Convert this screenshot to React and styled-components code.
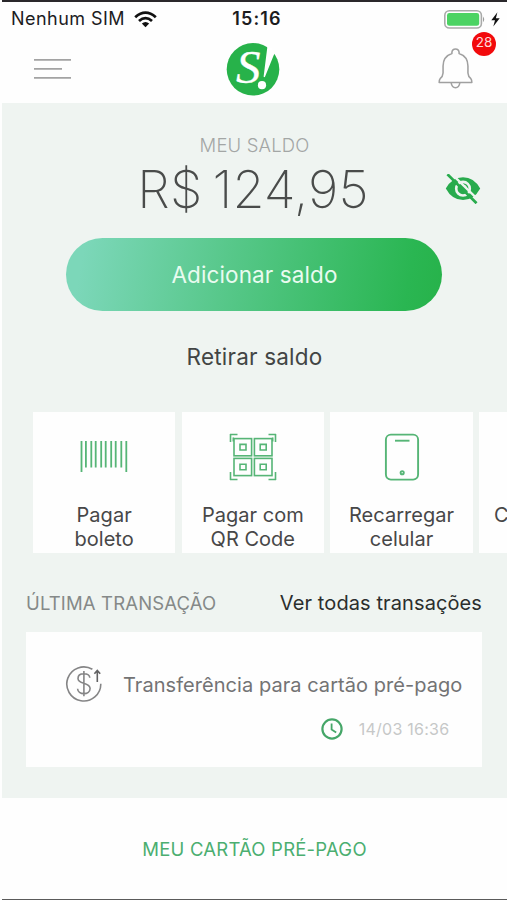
import React from "react";
import styled, { createGlobalStyle } from "styled-components";

const GREEN = "#27b24a";
const LINE_GREEN = "#56b576";

const GlobalStyle = createGlobalStyle`
  *, *::before, *::after { box-sizing: border-box; }
  body { margin: 0; background: #fff; font-family: Inter, "Liberation Sans", sans-serif; }
  svg { display: block; flex: none; }
`;

const Screen = styled.div`
  display: flex;
  flex-direction: column;
  width: 507px;
  height: 900px;
  padding-left: 2px;
  overflow: hidden;
  background: #fefefe;
`;

const StatusBar = styled.header`
  display: grid;
  flex: none;
  grid-template-columns: 1fr auto 1fr;
  align-items: center;
  height: 34px;
  padding: 2px 7px 0 9px;
  border-top: 2px solid #2a282b;
  color: #1c1c1e;
  font-size: 18px;
  line-height: 24px;
`;

const Carrier = styled.div`
  display: flex;
  align-items: center;
  gap: 9px;
  letter-spacing: 0.45px;
  white-space: nowrap;
`;

const Clock = styled.time`
  padding-left: 3px;
  font-weight: 600;
  letter-spacing: 1.1px;
`;

const Power = styled.div`
  display: flex;
  justify-content: flex-end;
  align-items: center;
  gap: 5px;
`;

const NavBar = styled.nav`
  display: grid;
  flex: none;
  grid-template-columns: 1fr auto 1fr;
  align-items: center;
  height: 69px;
  padding: 0 34px 0 31px;
`;

const IconButton = styled.button`
  position: relative;
  justify-self: ${(p) => p.$side};
  padding: 0;
  border: 0;
  background: none;
`;

const Badge = styled.span`
  position: absolute;
  top: -16px;
  right: -23px;
  width: 24px;
  height: 24px;
  border-radius: 50%;
  background: #f20a0c;
  color: #ffd9d9;
  font: 400 13.5px/21px Inter, sans-serif;
  text-align: center;
`;

const Main = styled.main`
  display: flex;
  flex: none;
  flex-direction: column;
  height: 695px;
  background: #eff4f1;
`;

const BalanceLabel = styled.h2`
  margin: 29.6px 0 0;
  color: #a3a6a5;
  font-size: 18.5px;
  font-weight: 300;
  line-height: 24px;
  letter-spacing: 0.15px;
  text-align: center;
`;

const BalanceRow = styled.div`
  display: grid;
  grid-template-columns: 1fr auto 1fr;
  align-items: center;
  height: 63.4px;
  padding: 0 26px 0 23px;
`;

const Amount = styled.strong`
  grid-column: 2;
  padding-top: 1px;
  color: #4a4c4b;
  font-size: 52px;
  font-weight: 200;
  line-height: 63px;
  letter-spacing: 0.1px;
  word-spacing: -4.5px;
  white-space: nowrap;
`;

const AddButton = styled.button`
  align-self: center;
  width: 376px;
  height: 73px;
  margin: 18px 2px 0 0;
  padding: 0 0 0 2px;
  border: 0;
  border-radius: 37px;
  background: linear-gradient(100deg, #7cd7b9 5%, #58c88b 42%, #2ab652 90%, #27b24a 100%);
  color: #e9fbf0;
  font: 400 22.5px/73px Inter, sans-serif;
  letter-spacing: 0.1px;
`;

const WithdrawButton = styled.button`
  align-self: center;
  margin-top: 31px;
  padding: 0;
  border: 0;
  background: none;
  color: #424544;
  font: 400 22.5px/30px Inter, sans-serif;
  letter-spacing: 0.2px;
`;

const Shortcuts = styled.div`
  display: flex;
  gap: 6.4px;
  height: 141px;
  margin-top: 40px;
  padding-left: 31px;
  overflow: hidden;
`;

const Shortcut = styled.button`
  display: flex;
  flex: none;
  flex-direction: column;
  align-items: ${(p) => (p.$start ? "flex-start" : "center")};
  width: 142.3px;
  padding: 21px ${(p) => (p.$start ? 15 : 0)}px 0;
  border: 0;
  background: #fefefe;
  color: #474748;
  font: 400 20px/24.6px Inter, sans-serif;
  letter-spacing: 0.02px;
`;

const ShortcutIcon = styled.span`
  height: 69.8px;
`;

const ShortcutLabel = styled.span`
  white-space: pre-line;
`;

const SectionHead = styled.div`
  display: flex;
  justify-content: space-between;
  align-items: center;
  height: 26px;
  margin-top: 37px;
  padding: 0 25px 0 24px;
  white-space: nowrap;
`;

const SectionTitle = styled.h3`
  margin: 0;
  padding-top: 1px;
  color: #858988;
  font-size: 18.5px;
  font-weight: 400;
  letter-spacing: 0.15px;
`;

const SectionLink = styled.a`
  color: #2b2e2d;
  font-size: 20px;
  letter-spacing: 0.1px;
`;

const Transaction = styled.article`
  display: flex;
  gap: 20px;
  height: 135px;
  margin: 16px 25px 0 24px;
  padding: 33px 0 0 39px;
  background: #fefefe;
`;

const Details = styled.div`
  display: flex;
  flex-direction: column;
  padding-top: 7px;
`;

const Description = styled.span`
  color: #737374;
  font-size: 20px;
  line-height: 26px;
  letter-spacing: 0.05px;
  white-space: nowrap;
`;

const When = styled.span`
  display: flex;
  align-items: center;
  justify-content: flex-end;
  gap: 16px;
  height: 24px;
  margin-top: 19px;
  padding-right: 13px;
  color: #c6c8c8;
  font-size: 16px;
  letter-spacing: 0.25px;
`;

const Footer = styled.footer`
  flex: none;
  height: 102px;
  border-bottom: 1px solid #5a5a5a;
  color: #4bae70;
  font-size: 18.5px;
  line-height: 102px;
  letter-spacing: 0.22px;
  text-align: center;
`;

const WifiIcon = () => (
  <svg width="23" height="17" viewBox="0 0 23 17" fill="none" stroke="#111" strokeWidth="2.8">
    <path d="M1.2 6.2Q11.5 -3 21.8 6.2" />
    <path d="M5 10Q11.5 4.3 18 10" />
    <path d="M11.5 16.3L7.8 12.6Q11.5 9.6 15.2 12.6Z" fill="#111" stroke="none" />
  </svg>
);

const BatteryIcon = () => (
  <svg width="42" height="19" viewBox="0 0 42 19">
    <rect x="0.8" y="0.8" width="36.6" height="17.2" rx="4.6" fill="#fff" stroke="#a9aaa9" strokeWidth="1.6" />
    <rect x="3" y="3" width="32.2" height="12.8" rx="2.4" fill="#4cd363" />
    <path d="M39 6.5Q41.4 9.4 39 12.3Z" fill="#9a9b9a" />
  </svg>
);

const BoltIcon = () => (
  <svg width="9" height="15" viewBox="0 0 9 15" fill="#111">
    <path d="M6.4 0.3L0.3 8.3H4L2.3 14.6L8.7 6.2H4.9Z" />
  </svg>
);

const MenuIcon = () => (
  <svg width="39" height="22" viewBox="0 0 39 22" stroke="#a3a3a3" strokeWidth="1.7">
    <path d="M1 1.8H38M1 10.8H29M1 19.8H38" />
  </svg>
);

const LogoMark = styled.svg`
  font-family: "Liberation Serif", serif;
  font-style: italic;
`;

const Logo = () => (
  <LogoMark width="54" height="54" viewBox="0 0 54 54">
    <circle cx="27" cy="27.3" r="26.3" fill={GREEN} />
    <text x="10" y="41" fontSize="46" fill="#fff" stroke="#fff" strokeWidth="0.3" textLength="24.5" lengthAdjust="spacingAndGlyphs">S</text>
    <path d="M41.4 4.6Q44.5 3.4 48.6 10.8Q48.2 12.4 47.2 14.6L38.8 35.2L37.6 34.8Z" fill="#fff" />
    <circle cx="36" cy="43.2" r="4.1" fill="#fff" />
  </LogoMark>
);

const BellIcon = () => (
  <svg width="35" height="41" viewBox="0 0 36 41" preserveAspectRatio="none" fill="none" stroke="#a0a0a0" strokeWidth="1.6" strokeLinejoin="round">
    <path d="M14.3 5.5V4.4Q14.7 1 18 1Q21.3 1 21.7 4.4V5.5Q30.8 8.5 30.8 18V25Q31 28.5 33.8 30.7Q34.8 32 34.8 34.5H1.2Q1.2 32 2.2 30.7Q5 28.5 5.2 25V18Q5.2 8.5 14.3 5.5Z" />
    <path d="M13.6 35Q14.3 39.7 18 39.7Q21.7 39.7 22.4 35" />
  </svg>
);

const HiddenEye = styled.svg`
  grid-column: 3;
  justify-self: end;
`;

const EyeIcon = () => (
  <HiddenEye width="36" height="30" viewBox="0 0 36 30" fill="none">
    <path d="M0.8 14.5Q7 3.2 18 3.2Q29 3.2 35.2 14.5Q29 26 18 26Q7 26 0.8 14.5Z" fill="#28ab4d" />
    <circle cx="18" cy="14.7" r="6.8" stroke="#eff4f1" strokeWidth="2.6" />
    <path d="M18.3 11.4Q21 11.6 21.3 14.4" stroke="#eff4f1" strokeWidth="1.2" />
    <path d="M5.5 -1.2L35 27.5" stroke="#eff4f1" strokeWidth="2.4" />
    <path d="M3.4 1.2L30.6 28.3" stroke="#28ab4d" strokeWidth="2.7" strokeLinecap="square" />
  </HiddenEye>
);

const BarcodeIcon = () => (
  <svg width="48" height="48" viewBox="0 0 48 48" stroke={LINE_GREEN} strokeWidth="1.8">
    <path d="M1.5 8V39M46.3 8V39M5.9 8V34.5M11.3 8V34.5M15.7 8V34.5M21.2 8V34.5M25.7 8V34.5M31.2 8V34.5M35.7 8V34.5M41.3 8V34.5" />
  </svg>
);

const QrIcon = () => (
  <svg width="48" height="48" viewBox="0 0 48 48" fill="none" stroke={LINE_GREEN} strokeWidth="1.6">
    <path d="M8.5 1.5H1M1.5 1V9M4.3 4.5V8.5M39.5 1.5H47M46.5 1V9M43.7 4.5V8.5M8.5 46.5H1M1.5 47V39M39.5 46.5H47M46.5 47V39" />
    <rect x="5" y="5.6" width="17.6" height="17.2" />
    <rect x="25.4" y="5.6" width="17.6" height="17.2" />
    <rect x="5" y="25.4" width="17.6" height="17.2" />
    <rect x="25.4" y="25.4" width="17.6" height="17.2" />
    <path d="M11 11.4H17V17H11ZM31.2 11.4H37.2V17H31.2ZM11 31.2H17V36.8H11ZM31.2 31.2H37.2V36.8H31.2Z" />
  </svg>
);

const PhoneIcon = () => (
  <svg width="48" height="48" viewBox="0 0 48 48" fill="none" stroke={LINE_GREEN} strokeWidth="1.9">
    <rect x="7.9" y="1.6" width="32.2" height="45" rx="5" />
    <path d="M17 7.7H31.5" />
    <circle cx="24.2" cy="39.7" r="1.6" />
  </svg>
);

const TransferIcon = () => (
  <svg width="38" height="38" viewBox="0 0 38 38" fill="none" stroke="#858586" strokeWidth="1.6">
    <path d="M27.4 4.3A17 17 0 1 0 35.8 18.8" />
    <path d="M32.3 17V6.5M29.4 8.8L32.3 5.5L35.2 8.8" stroke="#626263" />
    <path d="M24.8 12.8C24.6 10 22 8.8 18.8 8.8C15.5 8.8 13 10.5 13 13.4C13 19.6 25.1 16.8 25.1 23.6C25.1 26.7 22.2 28.6 19 28.6C15.5 28.6 12.7 26.6 12.6 23.8M18.9 6V31.2" />
  </svg>
);

const ClockIcon = () => (
  <svg width="22" height="22" viewBox="0 0 22 22" fill="none" stroke="#45a668" strokeWidth="2.2">
    <circle cx="11" cy="11" r="9.6" />
    <path d="M10.6 5.6V11.6L15.2 14.5" strokeWidth="1.8" />
  </svg>
);

const shortcuts = [
  { label: "Pagar\nboleto", Icon: BarcodeIcon },
  { label: "Pagar com\nQR Code", Icon: QrIcon },
  { label: "Recarregar\ncelular", Icon: PhoneIcon },
  { label: "C", start: true },
];

export default function App() {
  return (
    <>
      <GlobalStyle />
      <Screen>
        <StatusBar>
          <Carrier>Nenhum SIM <WifiIcon /></Carrier>
          <Clock>15:16</Clock>
          <Power><BatteryIcon /><BoltIcon /></Power>
        </StatusBar>
        <NavBar>
          <IconButton $side="start" aria-label="Menu"><MenuIcon /></IconButton>
          <Logo />
          <IconButton $side="end" aria-label="Notificações"><BellIcon /><Badge>28</Badge></IconButton>
        </NavBar>
        <Main>
          <BalanceLabel>MEU SALDO</BalanceLabel>
          <BalanceRow>
            <Amount>R$ 124,95</Amount>
            <EyeIcon />
          </BalanceRow>
          <AddButton>Adicionar saldo</AddButton>
          <WithdrawButton>Retirar saldo</WithdrawButton>
          <Shortcuts>
            {shortcuts.map(({ label, Icon, start }) => (
              <Shortcut key={label} $start={start}>
                <ShortcutIcon>{Icon && <Icon />}</ShortcutIcon>
                <ShortcutLabel>{label}</ShortcutLabel>
              </Shortcut>
            ))}
          </Shortcuts>
          <SectionHead>
            <SectionTitle>ÚLTIMA TRANSAÇÃO</SectionTitle>
            <SectionLink>Ver todas transações</SectionLink>
          </SectionHead>
          <Transaction>
            <TransferIcon />
            <Details>
              <Description>Transferência para cartão pré-pago</Description>
              <When><ClockIcon />14/03 16:36</When>
            </Details>
          </Transaction>
        </Main>
        <Footer>MEU CARTÃO PRÉ-PAGO</Footer>
      </Screen>
    </>
  );
}
